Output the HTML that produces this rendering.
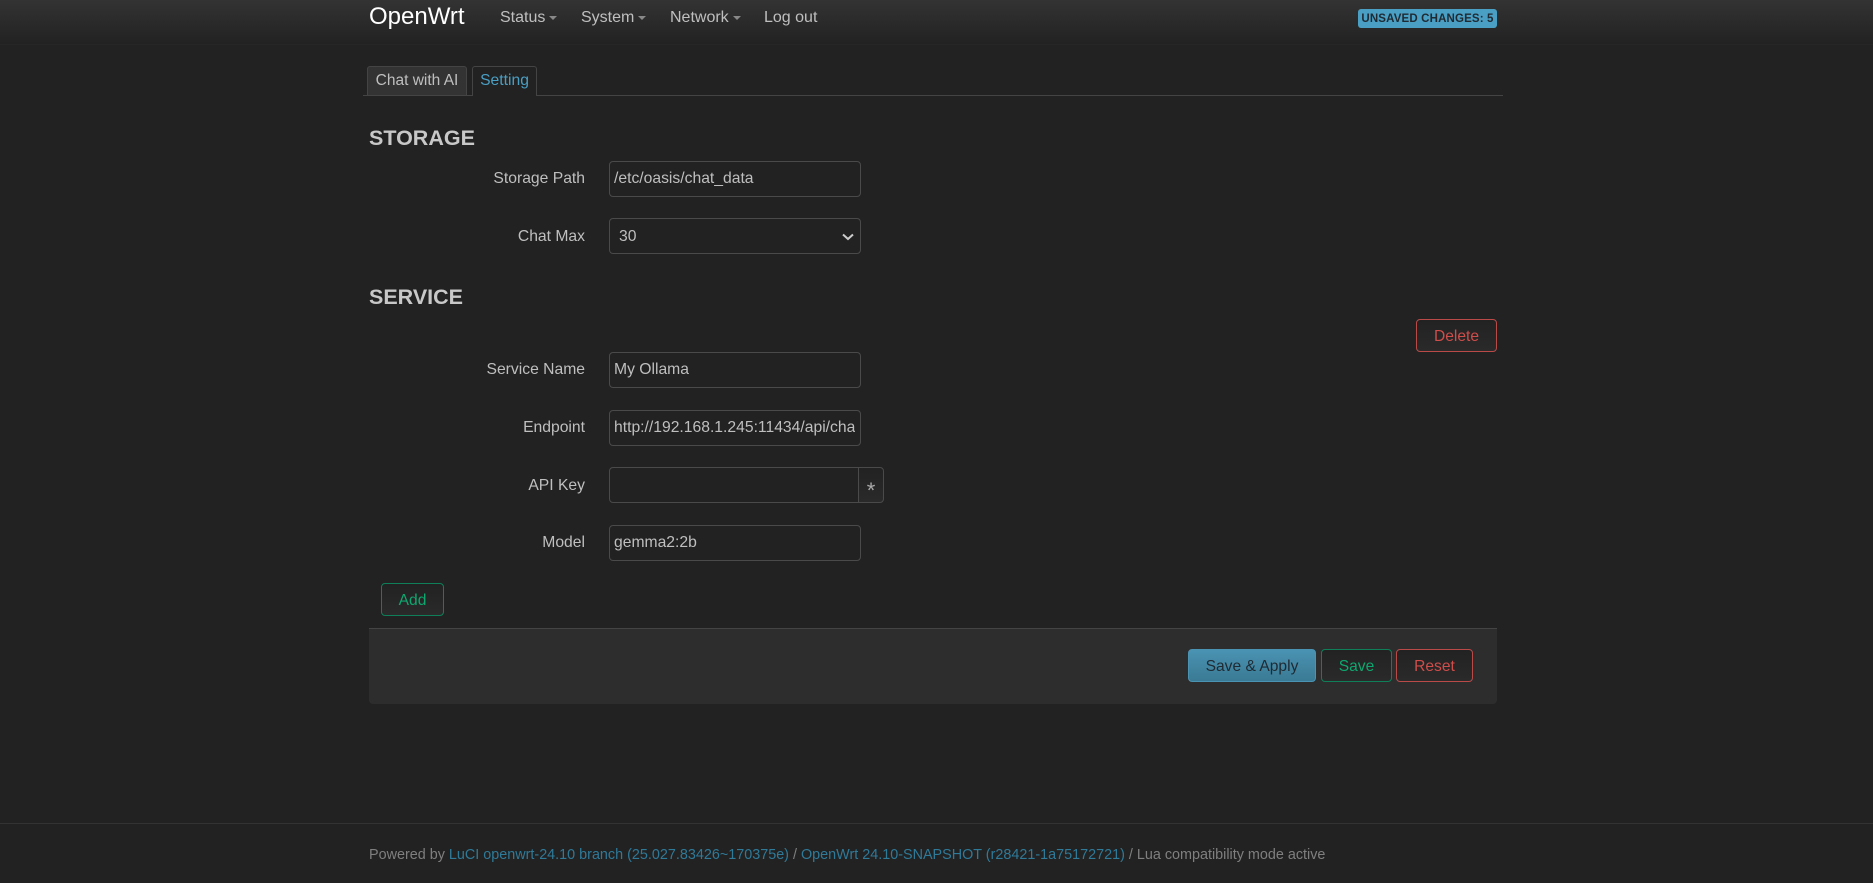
<!DOCTYPE html>
<html><head><meta charset="utf-8"><title>OpenWrt</title>
<style>
*{box-sizing:border-box}
html,body{margin:0;padding:0;width:1873px;height:883px;overflow:hidden;background:#222;font-family:"Liberation Sans",sans-serif;color:#ccc}
.a{position:absolute;white-space:nowrap}
#hdr{position:absolute;left:0;top:0;width:1873px;height:45px;background:linear-gradient(#333,#222);border-bottom:1px solid #262626}
.nav{font-size:16px;color:#bfbfbf;top:8px;line-height:20px}
.car{display:inline-block;width:0;height:0;border-top:4px solid #888;border-left:4px solid transparent;border-right:4px solid transparent;vertical-align:middle;margin-left:4px;margin-top:1px}
.lab{font-size:15.7px;color:#bfbfbf;text-align:right;right:1288px;line-height:20px}
.ctl{position:absolute;left:609px;width:252px;height:36px;border:1px solid #4a4a4a;border-radius:4px;background:#222;color:#bfbfbf;font-size:15.7px;line-height:34px;padding:0 4px;overflow:hidden;white-space:nowrap}
.btn{position:absolute;height:33px;border-radius:4px;font-size:15.6px;line-height:33px;text-align:center;background:linear-gradient(#222,#2a2a2a);white-space:nowrap}
.g{border:1px solid #0f7f5a;color:#0da86f}
.r{border:1px solid #b94a48;color:#cf4d4a}
h3{position:absolute;margin:0;font-size:21.5px;font-weight:bold;color:#c8c8c8;line-height:24px;white-space:nowrap}
a{color:#2f7a99;text-decoration:none}
</style></head><body>
<div id="hdr"></div>
<div class="a" style="left:369px;top:3px;font-size:24px;line-height:28px;color:#fff">OpenWrt</div>
<div class="a nav" style="left:500px">Status<span class="car"></span></div>
<div class="a nav" style="left:581px">System<span class="car"></span></div>
<div class="a nav" style="left:670px">Network<span class="car"></span></div>
<div class="a nav" style="left:764px">Log out</div>
<div class="a" style="left:1358px;top:9px;width:139px;height:19px;background:#4a9fc4;border-radius:3px;color:#1f2a33;font-size:11.5px;font-weight:bold;line-height:21px;text-align:center;letter-spacing:.15px">UNSAVED CHANGES: 5</div>

<div class="a" style="left:363px;top:95px;width:1140px;height:1px;background:#444"></div>
<div class="a" style="left:367px;top:66px;width:100px;height:30px;background:#333;border:1px solid #444;border-radius:3px 3px 0 0;font-size:15.5px;line-height:28px;text-align:center;color:#bfbfbf">Chat with AI</div>
<div class="a" style="left:472px;top:66px;width:65px;height:30px;background:#222;border:1px solid #444;border-bottom:0;border-radius:3px 3px 0 0;font-size:15.7px;line-height:28px;text-align:center;color:#4a9fc4">Setting</div>

<h3 style="left:369px;top:126px">STORAGE</h3>
<div class="a lab" style="top:169px">Storage Path</div>
<div class="ctl" style="top:161px">/etc/oasis/chat_data</div>
<div class="a lab" style="top:227px">Chat Max</div>
<div class="ctl" style="top:218px;padding-left:9px;line-height:36px">30<svg style="position:absolute;right:6px;top:14px" width="12" height="8" viewBox="0 0 12 8"><path d="M1 1.5 L6 6 L11 1.5" fill="none" stroke="#ccc" stroke-width="2"/></svg></div>

<h3 style="left:369px;top:285px">SERVICE</h3>
<div class="btn r" style="left:1416px;top:319px;width:81px">Delete</div>

<div class="a lab" style="top:360px">Service Name</div>
<div class="ctl" style="top:352px">My Ollama</div>
<div class="a lab" style="top:418px">Endpoint</div>
<div class="ctl" style="top:410px"><div style="width:241px;overflow:hidden">http://192.168.1.245:11434/api/chat</div></div>
<div class="a lab" style="top:476px">API Key</div>
<div class="ctl" style="top:467px;border-radius:4px 0 0 4px"></div>
<div class="a" style="left:858px;top:467px;width:26px;height:36px;background:linear-gradient(#222,#2a2a2a);border:1px solid #4a4a4a;border-radius:0 4px 4px 0;font-size:22px;line-height:46px;text-align:center;color:#aaa;overflow:hidden">*</div>
<div class="a lab" style="top:533px">Model</div>
<div class="ctl" style="top:525px">gemma2:2b</div>

<div class="btn g" style="left:381px;top:583px;width:63px">Add</div>

<div class="a" style="left:369px;top:628px;width:1128px;height:76px;background:#2d2d2d;border-top:1px solid #444;border-radius:0 0 4px 4px"></div>
<div class="btn" style="left:1188px;top:649px;width:128px;border:1px solid #4a93b3;background:linear-gradient(#4a93b3,#3a7a94);color:#1f2a33">Save &amp; Apply</div>
<div class="btn g" style="left:1321px;top:649px;width:71px">Save</div>
<div class="btn r" style="left:1396px;top:649px;width:77px">Reset</div>

<div class="a" style="left:0;top:823px;width:1873px;height:1px;background:#333"></div>
<div class="a" style="left:369px;top:846px;font-size:14.38px;line-height:18px;color:#7f7f7f">Powered by <a>LuCI openwrt-24.10 branch (25.027.83426~170375e)</a> / <a>OpenWrt 24.10-SNAPSHOT (r28421-1a75172721)</a> / Lua compatibility mode active</div>
</body></html>
